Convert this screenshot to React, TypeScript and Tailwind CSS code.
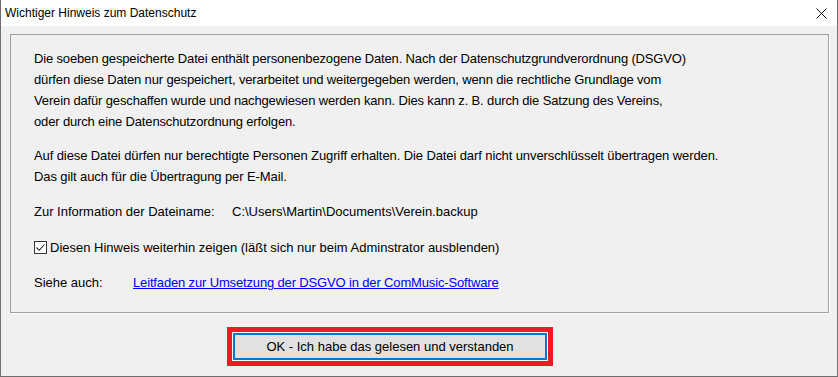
export default function App() {
  return (
    <div
      className="w-[838px] h-[377px] flex flex-col bg-[#f0f0f0] border-x border-b border-[#6f6f6f] text-black"
      style={{ fontFamily: '"Liberation Sans", Arial, sans-serif' }}
    >
      {/* Title bar */}
      <div className="h-[26px] bg-white flex items-center justify-between pl-[4px] pr-[9px] shrink-0">
        <span className="text-[12px]">Wichtiger Hinweis zum Datenschutz</span>
        <svg width="11" height="11" viewBox="0 0 11 11" className="mr-[1px]">
          <path d="M0.5 0.5 L10.5 10.5 M10.5 0.5 L0.5 10.5" stroke="#111" strokeWidth="1" />
        </svg>
      </div>

      {/* Body */}
      <div className="flex-1 flex flex-col">
        <div className="ml-[9px] mt-[8px] w-[819px] h-[279px] border border-[#a0a0a0] shadow-[1px_1px_0_#ffffff] pl-[23px] pt-[13px] text-[13px] leading-[21px]">
          <p className="tracking-[-0.15px]">
            Die soeben gespeicherte Datei enthält personenbezogene Daten. Nach der Datenschutzgrundverordnung (DSGVO)
            <br />
            dürfen diese Daten nur gespeichert, verarbeitet und weitergegeben werden, wenn die rechtliche Grundlage vom
            <br />
            Verein dafür geschaffen wurde und nachgewiesen werden kann. Dies kann z. B. durch die Satzung des Vereins,
            <br />
            oder durch eine Datenschutzordnung erfolgen.
          </p>
          <p className="mt-[13px] tracking-[-0.1px]">
            Auf diese Datei dürfen nur berechtigte Personen Zugriff erhalten. Die Datei darf nicht unverschlüsselt übertragen werden.
            <br />
            Das gilt auch für die Übertragung per E-Mail.
          </p>
          <div className="mt-[14px] flex">
            <span className="w-[198px]">Zur Information der Dateiname:</span>
            <span>C:\Users\Martin\Documents\Verein.backup</span>
          </div>
          <div className="mt-[15px] flex items-center gap-[3px]">
            <span className="w-[13px] h-[13px] border border-[#333] bg-white flex items-center justify-center">
              <svg width="11" height="11" viewBox="0 0 11 11">
                <path d="M1.5 5.5 L4.2 8.3 L9.5 2.5" fill="none" stroke="#222" strokeWidth="1.1" />
              </svg>
            </span>
            <span>Diesen Hinweis weiterhin zeigen (läßt sich nur beim Adminstrator ausblenden)</span>
          </div>
          <div className="mt-[14px] flex">
            <span className="w-[99px]">Siehe auch:</span>
            <a className="text-[#0000ff] underline tracking-[-0.15px]" href="#">
              Leitfaden zur Umsetzung der DSGVO in der ComMusic-Software
            </a>
          </div>
        </div>

        <div className="flex justify-start pl-[226px] mt-[14px]">
          <div className="border-[5px] border-[#ed1c24] bg-white p-[1px]">
            <button className="w-[314px] h-[27px] bg-[#e1e1e1] border-2 border-[#0078d7] text-[13px] flex items-center justify-center">
              OK - Ich habe das gelesen und verstanden
            </button>
          </div>
        </div>
      </div>
    </div>
  );
}
